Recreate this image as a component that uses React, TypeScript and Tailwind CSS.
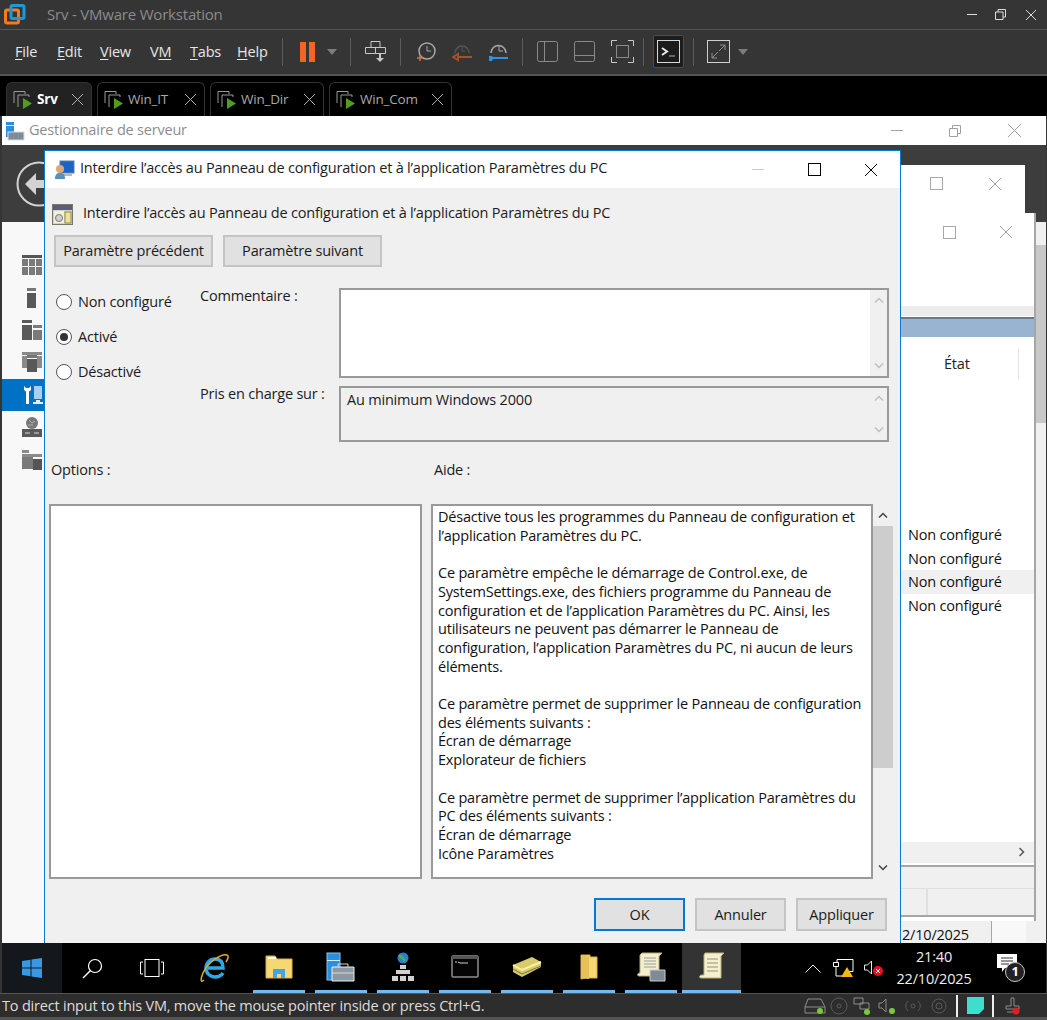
import type { ReactNode } from "react";

const helpText = `Désactive tous les programmes du Panneau de configuration et
l’application Paramètres du PC.

Ce paramètre empêche le démarrage de Control.exe, de
SystemSettings.exe, des fichiers programme du Panneau de
configuration et de l’application Paramètres du PC. Ainsi, les
utilisateurs ne peuvent pas démarrer le Panneau de
configuration, l’application Paramètres du PC, ni aucun de leurs
éléments.

Ce paramètre permet de supprimer le Panneau de configuration
des éléments suivants :
Écran de démarrage
Explorateur de fichiers

Ce paramètre permet de supprimer l’application Paramètres du
PC des éléments suivants :
Écran de démarrage
Icône Paramètres`;

function Sep() {
  return <div className="h-[28px] w-px shrink-0 bg-[#5c5c5c]" />;
}

function Ico({ w, h, children }: { w: number; h: number; children: ReactNode }) {
  return (
    <svg width={w} height={h} viewBox={`0 0 ${w} ${h}`} fill="none" className="shrink-0">
      {children}
    </svg>
  );
}

function Caret() {
  return (
    <Ico w={10} h={6}>
      <path d="M0 0h10L5 6z" fill="#7c7c7c" />
    </Ico>
  );
}

function Close({ size, color }: { size: number; color: string }) {
  return (
    <Ico w={size} h={size}>
      <path d={`M0 0L${size} ${size}M${size} 0L0 ${size}`} stroke={color} />
    </Ico>
  );
}

function Square({ size, color }: { size: number; color: string }) {
  return <div className="border" style={{ width: size, height: size, borderColor: color }} />;
}

function Menu({ w, u, rest, pre }: { w: string; u: string; rest: string; pre?: string }) {
  return (
    <div className={`${w} shrink-0`}>
      {pre}
      <span className="underline underline-offset-2">{u}</span>
      {rest}
    </div>
  );
}

function TabIcon() {
  return (
    <Ico w={20} h={20}>
      <path d="M1 13V1.5h11V4" stroke="#9a9a9a" />
      <path d="M5 17V5h11v2" stroke="#9a9a9a" />
      <path d="M10 8l9 5.5-9 5.5z" fill="#4f9f1d" />
    </Ico>
  );
}

function Tab({ label, w, active }: { label: string; w: string; active?: boolean }) {
  return (
    <div
      className={`${w} flex h-[34px] shrink-0 items-center rounded-t-md border border-b-0 border-[#333333] pl-[6px] ${
        active ? "bg-[#222222]" : "bg-black"
      }`}
    >
      <TabIcon />
      <span className={`ml-[4px] flex-1 text-[13.5px] ${active ? "font-bold text-white" : "text-[#a8a8a8]"}`}>
        {label}
      </span>
      <div className="mr-[8px]">
        <Close size={11} color="#b0b0b0" />
      </div>
    </div>
  );
}

function NavIcon({ children, active }: { children: ReactNode; active?: boolean }) {
  return <div className={`flex h-[32.4px] items-center pl-[20px] ${active ? "bg-[#0072c6]" : ""}`}>{children}</div>;
}

function DlgButton({ children, w, primary }: { children: ReactNode; w: string; primary?: boolean }) {
  return (
    <div
      className={`${w} flex shrink-0 items-center justify-center border-2 bg-[#e1e1e1] text-[#1c1c1c] ${
        primary ? "border-[#0078d7]" : "border-[#c4c4c4]"
      }`}
    >
      {children}
    </div>
  );
}

function Radio({ label, checked }: { label: string; checked?: boolean }) {
  return (
    <div className="flex h-[35px] items-center">
      <div className="flex h-[16px] w-[16px] items-center justify-center rounded-full border border-[#555555] bg-white">
        {checked && <div className="h-[8px] w-[8px] rounded-full bg-[#333333]" />}
      </div>
      <span className="ml-[6px]">{label}</span>
    </div>
  );
}

function Chevron({ up, color = "#c0c0c0" }: { up?: boolean; color?: string }) {
  return (
    <Ico w={10} h={6}>
      <path d={up ? "M1 5.5L5 1.5l4 4" : "M1 .5l4 4 4-4"} stroke={color} strokeWidth={1.5} />
    </Ico>
  );
}

function TextBox({ h, fill, children }: { h: string; fill: string; children?: ReactNode }) {
  return (
    <div className={`${h} flex border-2 border-[#999999] ${fill}`}>
      <div className="flex-1 px-[6px] py-[1px]">{children}</div>
      <div className="flex w-[17px] flex-col items-center justify-between bg-[#f0f0f0] py-[7px]">
        <Chevron up />
        <Chevron />
      </div>
    </div>
  );
}

function Dialog() {
  return (
    <div className="absolute top-[34px] left-[42px] flex h-[800px] w-[857px] flex-col border border-[#0a7ad1] bg-[#f0f0f0] text-[#1c1c1c]">
      <div className="flex h-[37px] shrink-0 items-center bg-white pl-[10px]">
        <Ico w={20} h={20}>
          <rect x="5" y="1" width="14" height="12" fill="#1d63c4" stroke="#5f7fa8" />
          <rect x="8" y="14" width="9" height="2" fill="#b8b8b8" />
          <circle cx="5" cy="9" r="4" fill="#d9a878" />
          <path d="M0 19c0-5 2-6 5-6s5 1 5 6z" fill="#5a8fb8" />
        </Ico>
        <span className="ml-[5px] flex-1 pb-[3px]">Interdire l’accès au Panneau de configuration et à l’application Paramètres du PC</span>
        <div className="h-px w-[12px] bg-[#c8c8c8]" />
        <div className="ml-[44px]">
          <Square size={13} color="#000000" />
        </div>
        <div className="mr-[23px] ml-[44px]">
          <Close size={12} color="#000000" />
        </div>
      </div>

      <div className="mt-[15px] flex h-[22px] items-center pl-[7px]">
        <Ico w={21} h={21}>
          <rect x=".5" y=".5" width="20" height="20" fill="#d8d4b8" stroke="#77776a" />
          <rect x="1" y="1" width="19" height="5" fill="#5c5a88" />
          <rect x="2" y="7" width="10" height="12" fill="#f3efe0" />
          <circle cx="7" cy="14" r="3.5" fill="#d0d0d0" stroke="#777777" />
          <rect x="13" y="8" width="6" height="11" fill="#efe09a" stroke="#8b8b64" />
        </Ico>
        <span className="ml-[10px] pb-[3px]">Interdire l’accès au Panneau de configuration et à l’application Paramètres du PC</span>
      </div>

      <div className="mt-[10px] flex h-[32px] gap-[10px] pl-[9px]">
        <DlgButton w="w-[159px]">Paramètre précédent</DlgButton>
        <DlgButton w="w-[159px]">Paramètre suivant</DlgButton>
      </div>

      <div className="mt-[21px] flex pl-[11px]">
        <div className="w-[144px]">
          <div className="mt-[-4px]">
            <Radio label="Non configuré" />
            <Radio label="Activé" checked />
            <Radio label="Désactivé" />
          </div>
        </div>
        <div className="grid w-[689px] grid-cols-[139px_550px] gap-y-[8px]">
          <div className="leading-[16px]">Commentaire :</div>
          <TextBox h="h-[90px]" fill="bg-white" />
          <div className="leading-[16px]">Pris en charge sur :</div>
          <TextBox h="h-[56px]" fill="bg-[#f0f0f0]">
            Au minimum Windows 2000
          </TextBox>
        </div>
      </div>

      <div className="mt-[18px] flex h-[20px] items-center pl-[6px]">
        <div className="w-[383px]">Options :</div>
        <div>Aide :</div>
      </div>

      <div className="mt-[24px] flex h-[375px] pl-[4px]">
        <div className="w-[373px] border-2 border-[#999999] bg-white" />
        <div className="ml-[9px] w-[442px] border-2 border-[#999999] bg-white px-[5px] pt-[2px] text-[#111111]">
          <div className="leading-[18.7px] whitespace-pre">{helpText}</div>
        </div>
        <div className="flex w-[20px] flex-col items-center">
          <div className="flex h-[22px] items-center">
            <Chevron up color="#444444" />
          </div>
          <div className="h-[242px] w-full bg-[#cdcdcd]" />
          <div className="flex-1" />
          <div className="flex h-[22px] items-center">
            <Chevron color="#444444" />
          </div>
        </div>
      </div>

      <div className="mt-[19px] flex h-[33px] pl-[549px]">
        <DlgButton w="w-[91px]" primary>
          OK
        </DlgButton>
        <div className="ml-[10px]">
          <DlgButton w="w-[91px] h-[33px]">Annuler</DlgButton>
        </div>
        <div className="ml-[10px]">
          <DlgButton w="w-[91px] h-[33px]">Appliquer</DlgButton>
        </div>
      </div>
    </div>
  );
}

function BackWindows() {
  return (
    <>
      <div className="absolute top-[49px] left-[880px] flex h-[120px] w-[143px] justify-end border-b-2 border-[#a0a0a0] bg-white pt-[13px]">
        <div className="mt-[-1px] mr-[46px]">
          <Square size={13} color="#a8a8a8" />
        </div>
        <div className="mr-[24px]">
          <Close size={12} color="#a0a0a0" />
        </div>
        <div className="absolute top-[86px] left-[122px] h-[16px] w-[16px] rounded-full bg-[#0a6cc0]" />
      </div>

      <div className="absolute top-[97px] left-[880px] flex h-[708px] w-[154px] flex-col border-r-2 border-[#a6a6a6] bg-white">
        <div className="flex h-[38px] shrink-0 items-center justify-end">
          <div className="mr-[44px]">
            <Square size={13} color="#a8a8a8" />
          </div>
          <div className="mr-[22px]">
            <Close size={12} color="#a0a0a0" />
          </div>
        </div>
        <div className="mt-[55px] h-[10px] bg-[#ececec]" />
        <div className="mt-[1px] h-[20px] border-t-2 border-[#6f7a86] bg-[#99b4d1]" />
        <div className="flex h-[54px] items-center pl-[62px]">
          <span className="w-[74px] text-[#222222]">État</span>
          <div className="h-[30px] w-px bg-[#e4e4e4]" />
        </div>
        <div className="mt-[132px] pl-[26px] leading-[23.7px] text-[#111111]">
          <div>Non configuré</div>
          <div>Non configuré</div>
          <div className="-ml-[26px] bg-[#f0f0f0] pl-[26px]">Non configuré</div>
          <div>Non configuré</div>
        </div>
        <div className="mt-[224px] flex h-[21px] items-center justify-end bg-[#f0f0f0] pr-[9px]">
          <Ico w={6} h={10}>
            <path d="M.5 1l4 4-4 4" stroke="#555555" strokeWidth={1.5} />
          </Ico>
        </div>
        <div className="mt-[2px] h-[23px] border-t-2 border-[#a6a6a6] bg-[#f0f0f0]" />
        <div className="flex h-[29px] border-t border-b-2 border-[#e0e0e0] border-b-[#a6a6a6] bg-[#f0f0f0]">
          <div className="w-[46px] border-r-2 border-[#e0e0e0]" />
        </div>
      </div>

      <div className="absolute top-[106px] left-[1034px] flex h-[721px] w-[10px] flex-col bg-[#f0f0f0]">
        <div className="mt-[23px] h-[178px] bg-[#c8c8c8]" />
      </div>

      <div className="absolute top-[805px] left-[899px] flex h-[22px] w-[145px] bg-[#f0f0f0] text-[#111111]">
        <div className="w-[90px] pt-[6px] pl-[1px] leading-[16px] whitespace-nowrap">2/10/2025</div>
        <div className="w-px bg-[#a6a6a6]" />
        <div className="w-[34px] bg-[#f8f8f8]" />
      </div>
    </>
  );
}

function ServerManager() {
  return (
    <div className="relative h-[827px] shrink-0 overflow-hidden bg-[#3d3d3d]">
      <div className="flex h-[29px] items-center bg-white">
        <div className="ml-[3px]">
          <Ico w={20} h={20}>
            <rect x="1" y="1" width="8" height="15" fill="#2b8fe0" />
            <rect x="1" y="4" width="8" height="1" fill="#d7ecfb" />
            <rect x="3" y="11" width="16" height="8" fill="#7f8b96" stroke="#d5dde3" />
          </Ico>
        </div>
        <span className="ml-[4px] flex-1 pb-[1px] text-[#8d8d8d]">Gestionnaire de serveur</span>
        <div className="mr-[46px] h-px w-[12px] bg-[#a4a4a4]" />
        <div className="mr-[47px]">
          <Ico w={12} h={12}>
            <path d="M.5 3.5h8v8h-8zM3.5 3.5v-3h8v8h-3" stroke="#a0a0a0" />
          </Ico>
        </div>
        <div className="mr-[25px]">
          <Close size={13} color="#a0a0a0" />
        </div>
      </div>

      <div className="flex h-[77px] items-center pl-[14px]">
        <svg width="46" height="46" viewBox="0 0 46 46" fill="none">
          <circle cx="23" cy="23" r="21.5" stroke="#d2d2d2" strokeWidth={2} />
          <path d="M20 12L9 23l11 11v-7h20v-8H20z" fill="#d2d2d2" />
        </svg>
      </div>

      <div className="h-[721px] w-[42px] bg-[#f8f8f8] pt-[27px]">
        <NavIcon>
          <Ico w={20} h={20}>
            <path d="M0 0h20v3H0z" fill="#555555" />
            <path d="M0 4h6v7H0zM7 4h6v7H7zM14 4h6v7h-6zM0 12h6v8H0zM7 12h6v8H7zM14 12h6v8h-6z" fill="#7a7a7a" />
          </Ico>
        </NavIcon>
        <NavIcon>
          <div className="ml-[5px]">
            <Ico w={9} h={20}>
              <path d="M0 0h9v3H0z" fill="#777777" />
              <path d="M0 5h9v15H0z" fill="#595959" />
            </Ico>
          </div>
        </NavIcon>
        <NavIcon>
          <Ico w={20} h={20}>
            <path d="M0 0h10v3H0zM0 5h10v15H0z" fill="#595959" />
            <path d="M11 5h9v3h-9zM11 10h9v10h-9z" fill="#7a7a7a" />
          </Ico>
        </NavIcon>
        <NavIcon>
          <Ico w={20} h={20}>
            <path d="M0 0h20v3H0zM0 4h5v12H0zM15 4h5v12h-5z" fill="#8a8a8a" />
            <path d="M5 3h10v3H5z" fill="#777777" />
            <path d="M5 7h10v13H5z" fill="#595959" />
          </Ico>
        </NavIcon>
        <NavIcon active>
          <div className="ml-[1px]">
            <Ico w={20} h={20}>
              <path d="M1 1v4l2 1.5V19h3V6.500L8 5V1L6 3H3z" fill="#fff" />
              <path d="M11 1h8v13h-8z" fill="#a9d1ee" />
              <path d="M13 15h4v2h3v2H10v-2h3z" fill="#e6f2fb" />
            </Ico>
          </div>
        </NavIcon>
        <NavIcon>
          <Ico w={20} h={20}>
            <circle cx="10" cy="6" r="6" fill="#777777" />
            <path d="M7 3l3 3 3-2M6 8l5 0" stroke="#b0b0b0" />
            <path d="M0 12h20v8H0z" fill="#595959" />
            <path d="M3 16h5M12 16h5" stroke="#d8d8d8" />
          </Ico>
        </NavIcon>
        <NavIcon>
          <Ico w={20} h={20}>
            <path d="M0 0h7v3H0zM0 4h20v3H0z" fill="#8a8a8a" />
            <path d="M0 7h11v12H0z" fill="#7a7a7a" />
            <path d="M11 9h9v11h-9z" fill="#555555" />
          </Ico>
        </NavIcon>
      </div>

      <BackWindows />
      <Dialog />
    </div>
  );
}

function Underline({ active, children }: { active?: boolean; children: ReactNode }) {
  return (
    <div className={`flex h-[50px] shrink-0 flex-col items-center ${active ? "w-[59px] bg-[#333333]" : "w-[62px] px-[5px]"}`}>
      <div className="flex flex-1 items-center justify-center">{children}</div>
      <div className="h-[3px] w-full bg-[#76b9ed]" />
    </div>
  );
}

function Taskbar() {
  return (
    <div className="flex h-[50px] shrink-0 items-center bg-black text-white">
      <div className="flex h-full w-[60px] shrink-0 items-center justify-center bg-[#14181d]">
        <Ico w={20} h={20}>
          <path d="M0 3l8.5-1.2v7.700H0zM9.5 1.600L20 0v9.500H9.500zM0 10.500h8.500v7.700L0 17zM9.500 10.500H20V20L9.500 18.400z" fill="#3a97e2" />
        </Ico>
      </div>
      <div className="flex w-[60px] shrink-0 justify-center">
        <Ico w={21} h={21}>
          <circle cx="13" cy="8" r="6.5" stroke="#fff" strokeWidth={1.2} />
          <path d="M8.5 12.500L1 20" stroke="#fff" strokeWidth={1.5} />
        </Ico>
      </div>
      <div className="flex w-[60px] shrink-0 justify-center">
        <Ico w={24} h={18}>
          <rect x="5" y=".5" width="14" height="17" stroke="#fff" />
          <path d="M3 3H.5v12H3M21 3h2.500v12H21" stroke="#fff" />
        </Ico>
      </div>
      <div className="flex w-[66px] shrink-0 justify-center">
        <Ico w={30} h={30}>
          <path d="M8 15h15c0-6-3-9-8-9s-9 4-9 9 4 9 9 9c4 0 6-1 8-4" stroke="#2ea8e6" strokeWidth={3.5} />
          <path d="M4 27C1 30 0 27 3 20 8 9 22 0 27 2c2 1 1 4-1 7" stroke="#e5a823" strokeWidth={1.5} />
        </Ico>
      </div>
      <Underline>
        <Ico w={28} h={24}>
          <path d="M1 1h9l2 3h15v19H1z" fill="#f7d774" stroke="#d9b24e" />
          <path d="M3 2h8v2H3z" fill="#fff" />
          <path d="M8 23v-9h12v9h-4v-4h-4v4z" fill="#3da6e8" />
        </Ico>
      </Underline>
      <Underline>
        <Ico w={30} h={30}>
          <rect x="1" y="1" width="13" height="27" fill="#2b8fe0" stroke="#8dc4ee" />
          <rect x="1" y="8" width="13" height="1" fill="#d7ecfb" />
          <path d="M6 15h22v14H6z" fill="#8c99a5" stroke="#eeeeee" />
          <path d="M12 15v-3h10v3M6 21h22" stroke="#d8d8d8" />
        </Ico>
      </Underline>
      <Underline>
        <Ico w={24} h={30}>
          <circle cx="12" cy="6" r="5.5" fill="#2c7fd6" />
          <path d="M8 3c2 2 4 3 6 6" stroke="#4db53f" strokeWidth={2.5} />
          <path d="M9 13h6v4H9zM5 18h14v4H5zM1 24h6v5H1zM9 24h6v5H9zM17 24h6v5h-6z" fill="#d0d0d0" />
        </Ico>
      </Underline>
      <Underline>
        <Ico w={28} h={23}>
          <rect x="1" y="1" width="26" height="21" rx="1" fill="#050505" stroke="#8f8f8f" strokeWidth={1.5} />
          <path d="M1 1h26v3H1z" fill="#555555" />
          <path d="M4 7h2M7 7l2 1 8 0" stroke="#cfcfcf" />
        </Ico>
      </Underline>
      <Underline>
        <Ico w={30} h={24}>
          <path d="M1 10L20 2l9 5v5L10 22l-9-5z" fill="#d9cb6a" />
          <path d="M1 10l9 5 19-8" stroke="#f6efb0" strokeWidth={2} />
          <path d="M1 14l9 5 19-8" stroke="#7d7430" />
        </Ico>
      </Underline>
      <Underline>
        <Ico w={18} h={26}>
          <path d="M1 1l9 0 0 2h7v21H6l-5 1z" fill="#f7d774" stroke="#d9b24e" />
          <path d="M1 1l8 2v22l-8-1z" fill="#e8c05a" />
        </Ico>
      </Underline>
      <Underline>
        <Ico w={30} h={30}>
          <path d="M6 1h20l-3 3v20H3c-2 0-2-3 1-3V3z" fill="#f3eecb" stroke="#b5ae7c" />
          <path d="M8 6h12M8 9h12M8 12h12M8 15h12" stroke="#9c9c9c" />
          <path d="M14 18h15v11H14z" fill="#7f8b96" stroke="#cccccc" />
        </Ico>
      </Underline>
      <Underline active>
        <Ico w={26} h={30}>
          <path d="M6 1h19l-3 3v22H2c-2 0-2-3 1-3h2V3z" fill="#f6f0cc" stroke="#b8b27e" />
          <path d="M8 7h11M8 11h11M8 15h11M8 19h11" stroke="#8f8f8f" />
        </Ico>
      </Underline>

      <div className="ml-[64px]">
        <Ico w={16} h={9}>
          <path d="M.5 8.5L8 1l7.500 7.500" stroke="#f0f0f0" />
        </Ico>
      </div>
      <div className="ml-[12px]">
        <Ico w={21} h={18}>
          <path d="M4 .5h16v12h-6M4 .5v3M.5 3.5h5v4h-5zM3 8v9h8" stroke="#fff" />
          <path d="M14 8l6 10H8z" fill="#f2b90f" />
        </Ico>
      </div>
      <div className="ml-[10px]">
        <Ico w={20} h={16}>
          <path d="M.5 5h3l4-4v13l-4-4h-3z" stroke="#e8e8e8" />
          <circle cx="14" cy="11" r="5" fill="#e81123" />
          <path d="M12 9l4 4M16 9l-4 4" stroke="#fff" />
        </Ico>
      </div>
      <div className="w-[100px] shrink-0 text-center leading-[22px] text-[#eeeeee]">
        <div>21:40</div>
        <div>22/10/2025</div>
      </div>
      <div className="relative ml-[12px] h-[30px] w-[34px]">
        <Ico w={22} h={20}>
          <path d="M1 1h20v14H9l-3 4v-4H1z" fill="#fff" />
          <path d="M5 5h12M5 8h12M5 11h8" stroke="#333333" />
        </Ico>
        <div className="absolute top-[9px] left-[9px] flex h-[20px] w-[20px] items-center justify-center rounded-full border border-[#c8c8c8] bg-[#222222] text-[13px] font-bold">
          1
        </div>
      </div>
    </div>
  );
}

function StatusBar() {
  return (
    <div className="flex h-[24px] shrink-0 items-center border-t border-[#555555] bg-[#2d2d2d] pl-[2px] text-[#dddddd]">
      <span className="flex-1">To direct input to this VM, move the mouse pointer inside or press Ctrl+G.</span>
      <div className="mr-[26px] flex items-center">
        <Ico w={22} h={18}>
          <path d="M4 2h13l4 8v6H1v-6zM1 10h20" stroke="#8c8c8c" />
          <circle cx="16" cy="14" r="3" fill="#7ec63b" />
        </Ico>
        <div className="ml-[4px]">
          <Ico w={18} h={18}>
            <circle cx="9" cy="9" r="8" stroke="#5a5a5a" />
            <circle cx="9" cy="9" r="2" stroke="#5a5a5a" />
          </Ico>
        </div>
        <div className="ml-[5px]">
          <Ico w={18} h={18}>
            <path d="M1 1h9v6H1zM7 6h9v6H7z" stroke="#8c8c8c" />
            <circle cx="14" cy="15" r="3" fill="#7ec63b" />
          </Ico>
        </div>
        <div className="ml-[7px]">
          <Ico w={18} h={18}>
            <path d="M1 6h3l4-4v13l-4-4H1z" stroke="#8c8c8c" />
            <circle cx="14" cy="14" r="3" fill="#7ec63b" />
          </Ico>
        </div>
        <div className="ml-[7px]">
          <Ico w={20} h={16}>
            <circle cx="10" cy="8" r="2" stroke="#5a5a5a" />
            <path d="M5 3c-3 3-3 7 0 10M15 3c3 3 3 7 0 10" stroke="#5a5a5a" />
          </Ico>
        </div>
        <div className="ml-[8px]">
          <Ico w={16} h={16}>
            <circle cx="8" cy="8" r="7" stroke="#5a5a5a" />
            <circle cx="8" cy="8" r="3" stroke="#5a5a5a" />
          </Ico>
        </div>
        <div className="mr-[9px] ml-[9px] h-[22px] w-[2px] bg-[#eeeeee]" />
        <Ico w={17} h={17}>
          <path d="M0 0h17v12l-5 5H0z" fill="#3ddfcc" />
        </Ico>
        <div className="mr-[11px] ml-[8px] h-[22px] w-[2px] bg-[#eeeeee]" />
        <Ico w={16} h={18}>
          <path d="M6 1h3v8h5v3H1V9h5zM2 15h6" stroke="#8c8c8c" />
          <circle cx="11" cy="14" r="3.5" fill="#e02020" />
        </Ico>
      </div>
    </div>
  );
}

export default function App() {
  return (
    <div className="flex h-[1020px] w-[1047px] flex-col overflow-hidden bg-[#353535] font-['Open_Sans',sans-serif] text-[14.5px] tracking-[-0.2px]">
      <div className="flex h-[30px] shrink-0 items-center border-b border-[#555555] pl-[4px]">
        <Ico w={22} h={22}>
          <rect x="1.5" y="6" width="13" height="13" rx="1.5" stroke="#f47b20" strokeWidth={3} />
          <rect x="7" y="1.5" width="13" height="13" rx="1.5" stroke="#1c9ad6" strokeWidth={3} />
        </Ico>
        <span className="ml-[21px] flex-1 text-[15px] text-[#8b8b8b]">Srv - VMware Workstation</span>
        <div className="mr-[18px] h-px w-[10px] bg-[#dcdcdc]" />
        <div className="mr-[20px]">
          <Ico w={11} h={11}>
            <path d="M.5 3H8v7.500H.5zM3 3V.5h7.500V8H8" stroke="#dcdcdc" />
          </Ico>
        </div>
        <div className="mr-[11px]">
          <Close size={10} color="#dcdcdc" />
        </div>
      </div>

      <div className="flex h-[44px] shrink-0 items-center pb-[1px] pl-[15px] text-[#e6e6e6]">
        <Menu w="w-[42px]" u="F" rest="ile" />
        <Menu w="w-[43px]" u="E" rest="dit" />
        <Menu w="w-[50px]" u="V" rest="iew" />
        <Menu w="w-[40px]" pre="V" u="M" rest="" />
        <Menu w="w-[47px]" u="T" rest="abs" />
        <Menu w="w-[45px]" u="H" rest="elp" />
        <Sep />
        <div className="flex w-[67px] shrink-0 items-center pl-[17px]">
          <div className="h-[20px] w-[6px] bg-[#f26522]" />
          <div className="ml-[3px] h-[20px] w-[6px] bg-[#f26522]" />
          <div className="ml-[12px]">
            <Caret />
          </div>
        </div>
        <Sep />
        <div className="flex w-[49px] shrink-0 justify-center">
          <Ico w={21} h={22}>
            <path d="M6 .5h9v6H6zM.5 6.5h10v6H.5zM10.500 6.500h10v6h-10z" stroke="#c8c8c8" />
            <path d="M14 13v4h-3l4 4 4-4h-3v-4z" fill="#c8c8c8" />
          </Ico>
        </div>
        <Sep />
        <div className="flex w-[121px] shrink-0 items-center gap-[16px] pl-[15px]">
          <Ico w={20} h={20}>
            <circle cx="11" cy="9" r="8" stroke="#a8a8a8" strokeWidth={1.5} />
            <path d="M11 4v5h4" stroke="#a8a8a8" />
            <path d="M4 13v6M1 16h6" stroke="#d2733c" strokeWidth={1.5} />
          </Ico>
          <Ico w={20} h={20}>
            <path d="M3 11a7 7 0 1 1 14 0" stroke="#555555" strokeWidth={1.5} />
            <path d="M10 4v5h3" stroke="#555555" />
            <path d="M20 15H6M6 12l-5 3 5 3z" stroke="#a84f28" strokeWidth={2} />
          </Ico>
          <Ico w={20} h={20}>
            <path d="M3 11a7.5 7.5 0 1 1 15 0" stroke="#a8a8a8" strokeWidth={1.5} />
            <path d="M11 4v5h4" stroke="#a8a8a8" />
            <path d="M1 14h3l1 1h15v2H5l-1 2H1" fill="#2f93dd" />
          </Ico>
        </div>
        <Sep />
        <div className="flex w-[120px] shrink-0 items-center gap-[16px] pl-[14px]">
          <Ico w={21} h={21}>
            <rect x=".5" y=".5" width="20" height="20" rx="2" stroke="#8a8a8a" />
            <path d="M7.5 1v19" stroke="#8a8a8a" />
          </Ico>
          <Ico w={21} h={21}>
            <rect x=".5" y=".5" width="20" height="20" rx="2" stroke="#8a8a8a" />
            <path d="M1 14.5h19" stroke="#8a8a8a" />
          </Ico>
          <Ico w={23} h={23}>
            <path d="M.5 6V.5H6M17 .5h5.500V6M22.500 17v5.500H17M6 22.500H.5V17" stroke="#c8c8c8" />
            <rect x="5.5" y="5.5" width="12" height="12" stroke="#8a8a8a" />
          </Ico>
        </div>
        <Sep />
        <div className="mx-[9px] flex h-[33px] w-[31px] shrink-0 items-center justify-center rounded-[2px] border border-[#0f5d98] bg-[#1c1c1c]">
          <Ico w={23} h={23}>
            <rect x=".5" y=".5" width="22" height="22" stroke="#d8d8d8" />
            <path d="M5 8l5 3.5L5 15" stroke="#e8e8e8" strokeWidth={2} />
            <path d="M12 16h6" stroke="#b0b0b0" />
          </Ico>
        </div>
        <Sep />
        <div className="ml-[13px]">
          <Ico w={23} h={23}>
            <rect x=".5" y=".5" width="22" height="22" stroke="#d0d0d0" />
            <path d="M13 5h5v5M18 5l-6 6M10 18H5v-5M5 18l6-6" stroke="#8f8f8f" />
          </Ico>
        </div>
        <div className="ml-[8px]">
          <Caret />
        </div>
      </div>

      <div className="h-[2px] shrink-0 bg-[#555555]" />

      <div className="flex h-[40px] shrink-0 items-end gap-[5px] bg-black pl-[6px]">
        <Tab label="Srv" w="w-[86px]" active />
        <Tab label="Win_IT" w="w-[108px]" />
        <Tab label="Win_Dir" w="w-[114px]" />
        <Tab label="Win_Com" w="w-[123px]" />
      </div>

      <div className="flex flex-1 flex-col pr-[1px] pl-[2px]">
        <ServerManager />
        <Taskbar />
      </div>

      <StatusBar />
      <div className="h-[3px] shrink-0 bg-[#555555]" />
    </div>
  );
}
